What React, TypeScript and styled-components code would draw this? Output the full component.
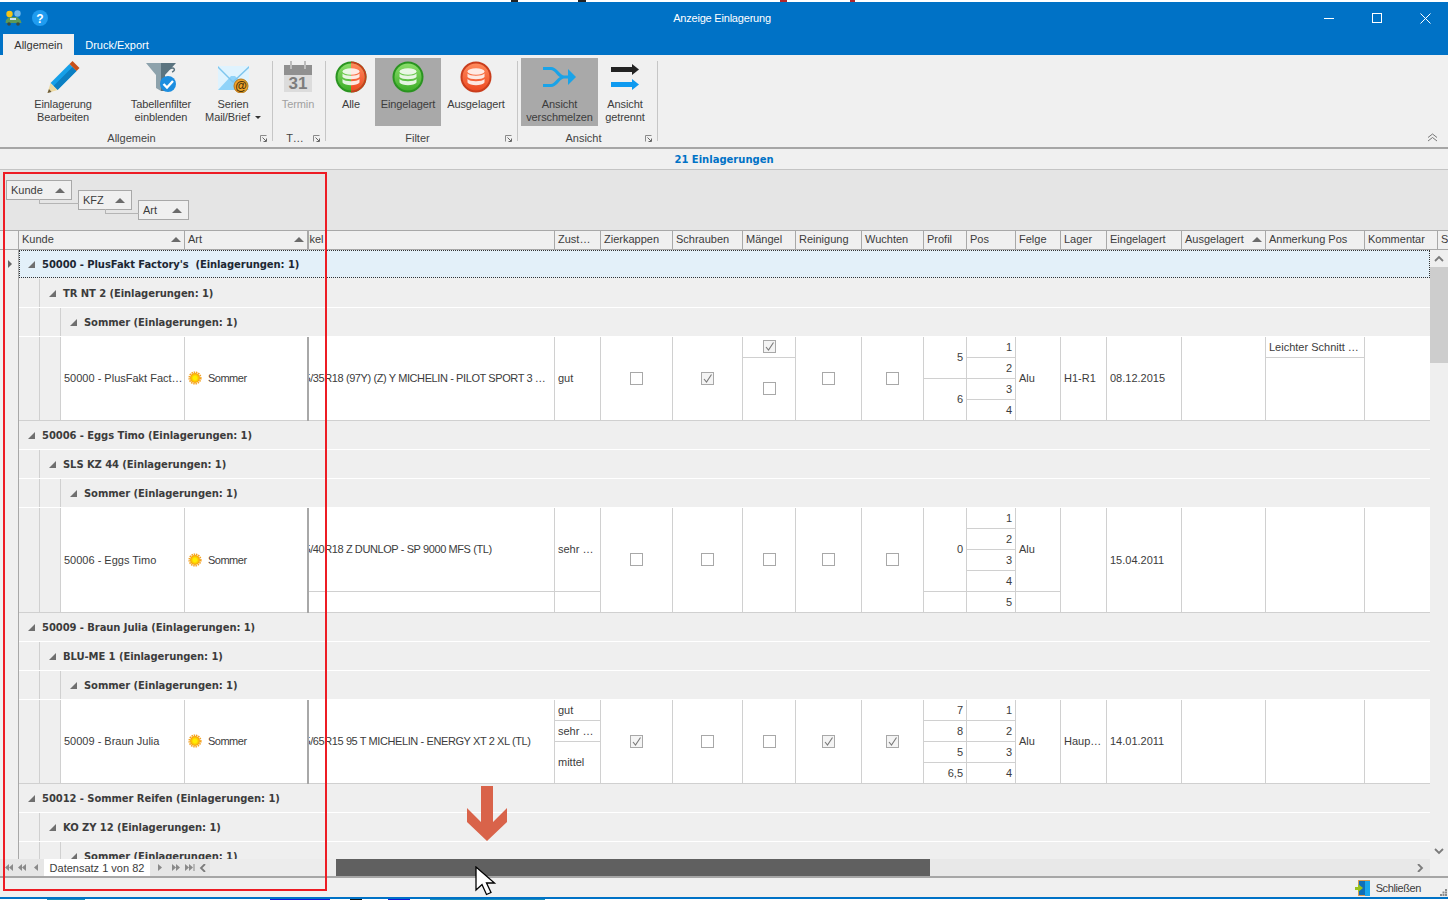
import { Fragment, ReactNode } from "react"
import styled, { createGlobalStyle } from "styled-components"

const GlobalStyle = createGlobalStyle`
  html, body { margin: 0; padding: 0; background: #f0f0f0; }
  body { font-family: "Liberation Sans", Arial, sans-serif; font-size: 11px; color: #3c3c3c; }
`

const BLUE = "#0072c6"
const LINE = "#d0d0d0"
const DARKLINE = "#a8a8a8"
const BOLD_FONT = `"DejaVu Sans", Verdana, sans-serif`

type Part = { h: number; text?: string; box?: "on" | "off"; sun?: boolean }
type Col = { title: string; w: number; right?: boolean; center?: boolean; shift?: boolean; heavy?: boolean; sort?: boolean }

const COLS: Col[] = [
  { title: "Kunde", w: 124, sort: true },
  { title: "Art", w: 124, heavy: true, sort: true },
  { title: "Artikel", w: 246, shift: true },
  { title: "Zust…", w: 46 },
  { title: "Zierkappen", w: 72, center: true },
  { title: "Schrauben", w: 70, center: true },
  { title: "Mängel", w: 53, center: true },
  { title: "Reinigung", w: 66, center: true },
  { title: "Wuchten", w: 62, center: true },
  { title: "Profil", w: 43, right: true },
  { title: "Pos", w: 49, right: true },
  { title: "Felge", w: 45 },
  { title: "Lager", w: 46 },
  { title: "Eingelagert", w: 75 },
  { title: "Ausgelagert", w: 84, sort: true },
  { title: "Anmerkung Pos", w: 99 },
  { title: "Kommentar", w: 73 },
]

const pos = (n: number): Part[] => Array.from({ length: n }, (_, i) => ({ h: 21, text: String(i + 1) }))
const one = (h: number, text = ""): Part[] => [{ h, text }]
const box = (h: number, on: boolean): Part[] => [{ h, box: on ? "on" : "off" }]

const ROWS: { groups: [string, string, string]; heights: [number, number, number]; focus?: boolean; cols: Part[][] }[] = [
  {
    groups: ["50000 - PlusFakt Factory's  (Einlagerungen: 1)", "TR NT 2 (Einlagerungen: 1)", "Sommer (Einlagerungen: 1)"],
    heights: [28, 30, 28],
    focus: true,
    cols: [
      one(84, "50000 - PlusFakt Fact…"),
      [{ h: 84, text: "Sommer", sun: true }],
      one(84, "225/35R18 (97Y) (Z) Y MICHELIN - PILOT SPORT 3 …"),
      one(84, "gut"),
      box(84, false),
      box(84, true),
      [{ h: 21, box: "on" }, { h: 63, box: "off" }],
      box(84, false),
      box(84, false),
      [{ h: 42, text: "5" }, { h: 42, text: "6" }],
      pos(4),
      one(84, "Alu"),
      one(84, "H1-R1"),
      one(84, "08.12.2015"),
      one(84),
      [{ h: 21, text: "Leichter Schnitt …" }, { h: 63 }],
      one(84),
    ],
  },
  {
    groups: ["50006 - Eggs Timo (Einlagerungen: 1)", "SLS KZ 44 (Einlagerungen: 1)", "Sommer (Einlagerungen: 1)"],
    heights: [29, 29, 28],
    cols: [
      one(105, "50006 - Eggs Timo"),
      [{ h: 105, text: "Sommer", sun: true }],
      [{ h: 84, text: "225/40R18 Z DUNLOP - SP 9000 MFS (TL)" }, { h: 21 }],
      [{ h: 84, text: "sehr …" }, { h: 21 }],
      box(105, false),
      box(105, false),
      box(105, false),
      box(105, false),
      box(105, false),
      [{ h: 84, text: "0" }, { h: 21 }],
      pos(5),
      [{ h: 84, text: "Alu" }, { h: 21 }],
      one(105),
      one(105, "15.04.2011"),
      one(105),
      one(105),
      one(105),
    ],
  },
  {
    groups: ["50009 - Braun Julia (Einlagerungen: 1)", "BLU-ME 1 (Einlagerungen: 1)", "Sommer (Einlagerungen: 1)"],
    heights: [29, 29, 28],
    cols: [
      one(84, "50009 - Braun Julia"),
      [{ h: 84, text: "Sommer", sun: true }],
      one(84, "195/65R15 95 T MICHELIN - ENERGY XT 2 XL (TL)"),
      [{ h: 21, text: "gut" }, { h: 21, text: "sehr …" }, { h: 42, text: "mittel" }],
      box(84, true),
      box(84, false),
      box(84, false),
      box(84, true),
      box(84, true),
      [{ h: 21, text: "7" }, { h: 21, text: "8" }, { h: 21, text: "5" }, { h: 21, text: "6,5" }],
      pos(4),
      one(84, "Alu"),
      one(84, "Haup…"),
      one(84, "14.01.2011"),
      one(84),
      one(84),
      one(84),
    ],
  },
]

const Screen = styled.div`
  position: relative;
  width: 1448px;
  height: 900px;
  overflow: hidden;
  display: flex;
  flex-direction: column;
  background: #f0f0f0;
`
const TopStrip = styled.div`
  height: 2px;
  background: linear-gradient(
    to right,
    #fff 511px,
    #222 511px 518px,
    #fff 518px 578px,
    #222 578px 586px,
    #fff 586px 780px,
    #b3262a 780px 787px,
    #fff 787px 850px,
    #b3262a 850px 855px,
    #fff 855px
  );
`
const TitleBar = styled.div`
  height: 32px;
  background: ${BLUE};
  display: grid;
  grid-template-columns: 1fr auto 1fr;
  align-items: center;
`
const QuickIcons = styled.div`
  display: flex;
  align-items: center;
  gap: 10px;
  padding-left: 5px;
`
const WindowTitle = styled.div`
  color: #fff;
  margin-right: 4px;
  letter-spacing: -0.2px;
`
const WindowButtons = styled.div`
  display: flex;
  justify-content: flex-end;
  margin-right: -1px;
`
const WindowButton = styled.div`
  width: 48px;
  height: 20px;
  display: flex;
  align-items: center;
  justify-content: center;
`
const TabBar = styled.div`
  height: 21px;
  background: ${BLUE};
  display: flex;
  padding-left: 3px;
`
const Tab = styled.div<{ $active?: boolean; $w: number }>`
  width: ${(p) => p.$w}px;
  display: flex;
  align-items: center;
  justify-content: center;
  background: ${(p) => (p.$active ? "#f0f0f0" : "transparent")};
  color: ${(p) => (p.$active ? "#333" : "#fff")};
`
const Ribbon = styled.div`
  height: 92px;
  display: flex;
  position: relative;
  border-bottom: 2px solid #a6a6a6;
  background: #f0f0f0;
`
const RibbonGroup = styled.div<{ $w: number }>`
  width: ${(p) => p.$w}px;
  display: flex;
  flex-direction: column;
`
const GroupButtons = styled.div<{ $pad?: number }>`
  height: 68px;
  margin-top: 3px;
  padding-left: ${(p) => p.$pad ?? 0}px;
  display: flex;
`
const RibbonButton = styled.div<{ $w: number; $ml?: number; $active?: boolean; $off?: boolean }>`
  width: ${(p) => p.$w}px;
  margin-left: ${(p) => p.$ml ?? 0}px;
  height: 68px;
  padding-top: 3px;
  box-sizing: border-box;
  display: flex;
  flex-direction: column;
  align-items: center;
  background: ${(p) => (p.$active ? "#a9a9a9" : "transparent")};
  color: ${(p) => (p.$off ? "#a0a0a0" : "#3c3c3c")};
`
const RibbonIcon = styled.div`
  height: 32px;
  display: flex;
  align-items: center;
  justify-content: center;
`
const RibbonLabel = styled.div`
  margin-top: 5px;
  line-height: 13px;
  text-align: center;
  white-space: nowrap;
  letter-spacing: -0.1px;
`
const DropMark = styled.span`
  display: inline-block;
  margin-left: 5px;
  vertical-align: 2px;
  border-style: solid;
  border-width: 3px 3px 0 3px;
  border-color: #333 transparent transparent transparent;
`
const GroupFooter = styled.div`
  display: flex;
  align-items: center;
  height: 13px;
  margin-top: 5px;
`
const GroupName = styled.div`
  flex: 1;
  padding-left: 3px;
  text-align: center;
  color: #444;
`
const Launcher = styled.div`
  width: 12px;
  display: flex;
  padding-top: 2px;
`
const RibbonSep = styled.div`
  flex: none;
  width: 1px;
  height: 80px;
  margin: 6px 1px 0 0;
  background: #c6c6c6;
`
const Collapse = styled.div`
  position: absolute;
  right: 10px;
  bottom: 5px;
  display: flex;
`
const CountBar = styled.div`
  height: 20px;
  display: flex;
  align-items: center;
  justify-content: center;
  font: bold 10px ${BOLD_FONT};
  color: ${BLUE};
  border-bottom: 1px solid #c4c4c4;
`
const GroupPanel = styled.div`
  height: 50px;
  padding: 10px 0 0 6px;
  background: #e5e5e5;
  display: flex;
  gap: 6px;
`
const GroupChip = styled.div<{ $w: number; $top: number; $link?: number }>`
  position: relative;
  width: ${(p) => p.$w}px;
  height: 20px;
  margin-top: ${(p) => p.$top}px;
  box-sizing: border-box;
  padding: 0 6px 0 4px;
  display: flex;
  align-items: center;
  justify-content: space-between;
  background: #f0f0f0;
  border: 1px solid #a8a8a8;
  &::before {
    content: "";
    display: ${(p) => (p.$link ? "block" : "none")};
    position: absolute;
    top: 8px;
    left: ${(p) => -(p.$link ?? 0) - 1}px;
    width: ${(p) => p.$link ?? 0}px;
    height: 4px;
    border-left: 1px solid #b4b4b4;
    border-bottom: 1px solid #b4b4b4;
  }
`
const SortMark = styled.span`
  flex: none;
  width: 0;
  height: 0;
  border-style: solid;
  border-width: 0 5px 5px 5px;
  border-color: transparent transparent #6b6b6b transparent;
`
const HeaderRow = styled.div`
  height: 18px;
  display: flex;
  background: #f0f0f0;
  border-top: 1px solid ${DARKLINE};
  border-bottom: 1px solid ${DARKLINE};
  overflow: hidden;
`
const HeaderGap = styled.div`
  flex: none;
  width: 18px;
  border-right: 1px solid ${DARKLINE};
`
const HeaderCell = styled.div<{ $w: number; $edge?: boolean }>`
  flex: none;
  width: ${(p) => p.$w}px;
  box-sizing: border-box;
  padding: 0 3px 2px;
  display: flex;
  align-items: center;
  justify-content: space-between;
  overflow: hidden;
  white-space: nowrap;
  border-right: 1px solid ${DARKLINE};
  border-left: ${(p) => (p.$edge ? `1px solid ${DARKLINE}` : "0")};
`
const ClippedTitle = styled.span`
  margin-left: -19px;
  margin-right: auto;
  white-space: nowrap;
`
const ClippedText = styled.span`
  margin-left: -16px;
  white-space: nowrap;
  letter-spacing: -0.4px;
`
const GridBody = styled.div`
  height: 609px;
  display: flex;
`
const Indicator = styled.div`
  flex: none;
  width: 18px;
  background: #f0f0f0;
  border-right: 1px solid ${DARKLINE};
  padding-top: 10px;
  height: 599px;
`
const CurrentMark = styled.div`
  margin-left: 8px;
  width: 0;
  height: 0;
  border-style: solid;
  border-width: 4px 0 4px 4px;
  border-color: transparent transparent transparent #666;
`
const Rows = styled.div`
  width: 1411px;
  overflow: hidden;
`
const GroupLine = styled.div<{ $h: number; $focus?: boolean; $plain?: boolean; $low?: boolean }>`
  height: ${(p) => p.$h}px;
  box-sizing: border-box;
  padding-top: ${(p) => (p.$low ? 1 : 0)}px;
  display: flex;
  align-items: stretch;
  background: ${(p) => (p.$focus ? "#e3f0f9" : "#efefef")};
  border: ${(p) => (p.$focus ? "1px dotted #333" : "0")};
  border-bottom: ${(p) => (p.$focus ? "1px dotted #333" : p.$plain ? "0" : "1px solid #fff")};
`
const Indent = styled.div`
  flex: none;
  width: 20px;
  background: #efefef;
  border-right: 1px solid ${LINE};
`
const GroupText = styled.div<{ $focus?: boolean }>`
  display: flex;
  align-items: center;
  font: bold 10px ${BOLD_FONT};
  letter-spacing: -0.08px;
  white-space: pre;
  color: ${(p) => (p.$focus ? "#1c2733" : "#3c3c3c")};
  margin-left: ${(p) => (p.$focus ? 8 : 9)}px;
`
const Expander = styled.span`
  width: 0;
  height: 0;
  margin-right: 7px;
  border-style: solid;
  border-width: 0 0 7px 7px;
  border-color: transparent transparent #6f6f6f transparent;
`
const DataLine = styled.div`
  display: flex;
  background: #fff;
  border-top: 1px solid #fff;
`
const DataIndent = styled(Indent)`
  border-bottom: 1px solid ${LINE};
`
const DataCol = styled.div<{ $w: number; $heavy?: boolean }>`
  flex: none;
  width: ${(p) => p.$w}px;
  box-sizing: border-box;
  display: flex;
  flex-direction: column;
  border-right: ${(p) => (p.$heavy ? `2px solid ${DARKLINE}` : `1px solid ${LINE}`)};
`
const DataPart = styled.div<{ $h: number; $right?: boolean; $center?: boolean; $shift?: boolean }>`
  height: ${(p) => p.$h}px;
  box-sizing: border-box;
  border-bottom: 1px solid ${LINE};
  padding: 0 ${(p) => (p.$shift ? 0 : 3)}px 1px;
  display: flex;
  align-items: center;
  overflow: hidden;
  white-space: nowrap;
  color: #3c3c3c;
  justify-content: ${(p) => (p.$right ? "flex-end" : p.$center ? "center" : "flex-start")};
`
const SunText = styled.span`
  display: flex;
  align-items: center;
  gap: 6px;
  letter-spacing: -0.5px;
`
const CheckBox = styled.div<{ $on?: boolean }>`
  width: 13px;
  height: 13px;
  box-sizing: border-box;
  border: 1px solid #a8a8a8;
  background: ${(p) => (p.$on ? "#f4f4f4" : "#fff")};
  display: flex;
  align-items: center;
  justify-content: center;
`
const VScroll = styled.div`
  flex: none;
  width: 18px;
  background: #efefef;
  display: flex;
  flex-direction: column;
`
const ScrollBtn = styled.div<{ $h: number }>`
  height: ${(p) => p.$h}px;
  display: flex;
  align-items: center;
  justify-content: center;
`
const VThumb = styled.div`
  height: 96px;
  background: #cdcdcd;
`
const VTrack = styled.div`
  flex: 1;
  background: #efefef;
`
const NavRow = styled.div`
  height: 17px;
  display: flex;
  border-bottom: 2px solid #a6a6a6;
  background: #ececec;
`
const Pager = styled.div`
  width: 336px;
  flex: none;
  display: flex;
  align-items: stretch;
  background: #ececec;
`
const PagerBtn = styled.div<{ $w: number }>`
  width: ${(p) => p.$w}px;
  flex: none;
  background: #e6e6e6;
  display: flex;
  align-items: center;
  justify-content: center;
`
const PagerLabel = styled.div`
  width: 106px;
  flex: none;
  background: #fff;
  display: flex;
  align-items: center;
  justify-content: center;
`
const HThumb = styled.div`
  width: 594px;
  flex: none;
  background: #606060;
`
const HTrack = styled.div`
  flex: 1;
  display: flex;
  align-items: center;
  justify-content: flex-end;
  padding-right: 4px;
  background: #e8e8e8;
`
const Corner = styled.div`
  width: 18px;
  flex: none;
  background: #f0f0f0;
`
const StatusBar = styled.div`
  height: 19px;
  display: flex;
  align-items: center;
  justify-content: flex-end;
  gap: 6px;
  background: #f0f0f0;
`
const CloseLabel = styled.span`
  letter-spacing: -0.4px;
`
const Grip = styled.div`
  margin-left: 13px;
  margin-top: 9px;
  margin-right: 1px;
  display: flex;
`
const BottomStrip = styled.div`
  flex: 1;
  border-top: 2px solid ${BLUE};
  background: linear-gradient(
    to right,
    #fff 47px,
    #1b8fb8 47px 85px,
    #fff 85px 270px,
    #1414d8 270px 330px,
    #fff 330px 350px,
    #111 350px 362px,
    #fff 362px 388px,
    #1414d8 388px 410px,
    #fff 410px 430px,
    #1b8fb8 430px 545px,
    #fff 545px
  );
`
const RedFrame = styled.div`
  position: absolute;
  left: 3px;
  top: 172px;
  width: 320px;
  height: 715px;
  border: 2px solid #ed1c24;
  pointer-events: none;
`
const DownArrow = styled.svg`
  position: absolute;
  left: 467px;
  top: 786px;
`
const Pointer = styled.svg`
  position: absolute;
  left: 475px;
  top: 866px;
`

function AppIcon() {
  return (
    <svg width="17" height="16" viewBox="0 0 17 16">
      <circle cx="4.5" cy="4" r="3.2" fill="#f5c518" />
      <circle cx="12.5" cy="3.5" r="3.2" fill="#6fb7ea" />
      <path d="M1 10 L4 7 H12 L15.5 10 L16.5 13 H0.5 Z" fill="#5c9a58" />
      <rect x="5" y="8" width="6" height="2" fill="#c8e3f2" />
      <circle cx="4" cy="14" r="1.8" fill="#3b4a3f" />
      <circle cx="13" cy="14" r="1.8" fill="#3b4a3f" />
    </svg>
  )
}

function HelpIcon() {
  return (
    <svg width="16" height="16" viewBox="0 0 16 16">
      <circle cx="8" cy="8" r="8" fill="#1f9cf0" />
      <text x="8" y="12.5" textAnchor="middle" fontSize="12" fontWeight="bold" fill="#fff" fontFamily="Liberation Sans">?</text>
    </svg>
  )
}

function PencilIcon() {
  return (
    <svg width="34" height="33" viewBox="0 0 33 33">
      <polygon points="4,22 23,3 30,10 11,29" fill="#16a0e8" />
      <polygon points="7,25 26,6 30,10 11,29" fill="#0c7fc2" />
      <polygon points="23,3 26,0 33,7 30,10" fill="#c8501a" />
      <polygon points="4,22 11,29 1,32" fill="#ecd9a0" />
      <polygon points="2.5,28 5,31 1,32" fill="#6a5a3a" />
    </svg>
  )
}

function FilterIcon() {
  return (
    <svg width="32" height="32" viewBox="0 0 32 32">
      <polygon points="1,2 16,2 16,30 11,27 11,14" fill="#8da2ac" />
      <polygon points="16,2 31,2 20,14 20,30 16,30" fill="#5b7480" />
      <path d="M24 8 C30 5 31 10 27 11" fill="none" stroke="#5b7480" strokeWidth="1.5" />
      <circle cx="23" cy="23" r="8" fill="#1c8ee0" />
      <path d="M18.5 23 L22 26.5 L28 20" fill="none" stroke="#fff" strokeWidth="2.4" />
    </svg>
  )
}

function MailIcon() {
  return (
    <svg width="33" height="32" viewBox="0 0 33 32">
      <rect x="1" y="5" width="31" height="24" fill="#dff3fe" />
      <polygon points="1,29 14,15 18,15 32,29" fill="#8fd3f9" />
      <polygon points="1,5 16,20 32,5 32,7 16,22 1,7" fill="#7ec6ee" />
      <circle cx="24" cy="25" r="7" fill="#f0a52a" stroke="#b5771a" />
      <text x="24" y="29" textAnchor="middle" fontSize="12" fontWeight="bold" fill="#4a3208" fontFamily="Liberation Sans">@</text>
    </svg>
  )
}

function CalendarIcon() {
  return (
    <svg width="30" height="33" viewBox="0 0 30 33">
      <rect x="1" y="4" width="28" height="27" fill="#dcdcdc" />
      <rect x="1" y="4" width="28" height="10" fill="#909090" />
      <rect x="7" y="0" width="2" height="8" fill="#bdbdbd" />
      <rect x="21" y="0" width="2" height="8" fill="#bdbdbd" />
      <text x="15" y="28" textAnchor="middle" fontSize="17" fontWeight="bold" fill="#7d7d7d" fontFamily="Liberation Sans">31</text>
    </svg>
  )
}

function DbStack() {
  return (
    <g fill="#fff" opacity="0.85">
      <ellipse cx="16" cy="10.5" rx="8.5" ry="3.2" />
      <path d="M7.5 12.5 C10 15.5 22 15.5 24.5 12.5 V16 C22 19 10 19 7.5 16 Z" />
      <path d="M7.5 18 C10 21 22 21 24.5 18 V21.5 C22 25 10 25 7.5 21.5 Z" />
    </g>
  )
}

function DbIcon({ tone }: { tone: "green" | "red" | "both" }) {
  const green = "url(#dbGreen)"
  const red = "url(#dbRed)"
  return (
    <svg width="32" height="32" viewBox="0 0 32 32">
      <defs>
        <linearGradient id="dbGreen" x1="0" y1="0" x2="0" y2="1">
          <stop offset="0%" stopColor="#8ade6a" />
          <stop offset="100%" stopColor="#3fae2a" />
        </linearGradient>
        <linearGradient id="dbRed" x1="0" y1="0" x2="0" y2="1">
          <stop offset="0%" stopColor="#ff8a5c" />
          <stop offset="100%" stopColor="#ee4a22" />
        </linearGradient>
      </defs>
      <circle cx="16" cy="16" r="15.5" fill={tone === "red" ? "#c93d1c" : "#2a9420"} />
      {tone === "both" && <path d="M16 .5 A15.500 15.500 0 0 1 16 31.500 Z" fill="#c93d1c" />}
      <circle cx="16" cy="16" r="13.5" fill={tone === "red" ? red : green} />
      {tone === "both" && <path d="M16 2.500 A13.500 13.500 0 0 1 16 29.500 Z" fill={red} />}
      <DbStack />
    </svg>
  )
}

function MergeIcon() {
  return (
    <svg width="33" height="24" viewBox="0 0 33 24">
      <path d="M0 3.500 H8 C14 3.500 15 12 21 12 H26 M0 20.500 H8 C14 20.500 15 12 21 12" fill="none" stroke="#1aa3e8" strokeWidth="3.200" />
      <polygon points="25,4 33,12 25,20" fill="#1aa3e8" />
    </svg>
  )
}

function SplitIcon() {
  return (
    <svg width="28" height="26" viewBox="0 0 28 26">
      <rect x="0" y="3" width="23" height="5" fill="#222" />
      <polygon points="21,0 28,5.500 21,11" fill="#222" />
      <rect x="0" y="18" width="23" height="5" fill="#0e9af0" />
      <polygon points="21,15 28,20.500 21,26" fill="#0e9af0" />
    </svg>
  )
}

function LauncherIcon() {
  return (
    <svg width="7" height="7" viewBox="0 0 7 7">
      <path d="M.5 6.5 V.5 H6.5" fill="none" stroke="#8a8a8a" />
      <path d="M2.5 2.5 L6 6 M3.5 6.5 H6.5 V3.5" fill="none" stroke="#666" />
    </svg>
  )
}

function Sun() {
  return (
    <svg width="14" height="14" viewBox="0 0 14 14">
      <defs>
        <radialGradient id="sunFill">
          <stop offset="35%" stopColor="#ffee00" />
          <stop offset="100%" stopColor="#f79a0a" />
        </radialGradient>
      </defs>
      <circle cx="7" cy="7" r="5.8" fill="none" stroke="#f4a11e" strokeWidth="1.600" strokeDasharray="1.500 0.800" />
      <circle cx="7" cy="7" r="5" fill="url(#sunFill)" />
    </svg>
  )
}

function Check() {
  return (
    <svg width="11" height="11" viewBox="0 0 11 11">
      <path d="M2 6 L4.5 9 L9.5 1.5" fill="none" stroke="#7a7a7a" strokeWidth="1.1" />
    </svg>
  )
}

function Chevron({ dir }: { dir: "up" | "down" | "left" | "right" }) {
  const d = {
    up: "M1 6 L5 2 L9 6",
    down: "M1 2 L5 6 L9 2",
    left: "M6 0 L2 4 L6 8",
    right: "M2 0 L6 4 L2 8",
  }[dir]
  return (
    <svg width="10" height="8" viewBox="0 0 10 8">
      <path d={d} fill="none" stroke="#7b7b7b" strokeWidth="1.8" />
    </svg>
  )
}

function NavGlyph({ back, count = 1, bar }: { back?: boolean; count?: number; bar?: boolean }) {
  const heads = Array.from({ length: count }, (_, i) => {
    const x = i * 4
    return back ? `M${x + 4} 0 L${x} 3.5 L${x + 4} 7 Z` : `M${x} 0 L${x + 4} 3.5 L${x} 7 Z`
  })
  const width = count * 4 + (bar ? 2 : 1)
  return (
    <svg width={width} height="7" viewBox={`${back && bar ? -2 : 0} 0 ${width} 7`}>
      <path d={heads.join(" ")} fill="#8a8a8a" />
      {bar && <rect x={back ? -2 : count * 4 + 0.5} y="0" width="1" height="7" fill="#8a8a8a" />}
    </svg>
  )
}

function DoorIcon() {
  return (
    <svg width="15" height="16" viewBox="0 0 15 16">
      <rect x="3" y="0" width="12" height="16" fill="#d99a4e" />
      <rect x="4" y="1" width="7" height="14" fill="#0f6fb8" />
      <rect x="10" y="1" width="5" height="15" fill="#1aa6ea" />
      <polygon points="0,7 3,7 3,4 8,8 3,12 3,10 0,10" fill="#9ac31c" />
    </svg>
  )
}

function cellBody(col: Col, part: Part): ReactNode {
  if (part.box) {
    return <CheckBox $on={part.box === "on"}>{part.box === "on" && <Check />}</CheckBox>
  }
  if (part.sun) {
    return (
      <SunText>
        <Sun />
        {part.text}
      </SunText>
    )
  }
  if (col.shift && part.text) return <ClippedText>{part.text}</ClippedText>
  return part.text
}

export default function App() {
  return (
    <Screen>
      <GlobalStyle />
      <TopStrip />
      <TitleBar>
        <QuickIcons>
          <AppIcon />
          <HelpIcon />
        </QuickIcons>
        <WindowTitle>Anzeige Einlagerung</WindowTitle>
        <WindowButtons>
          <WindowButton>
            <svg width="10" height="10" viewBox="0 0 10 10"><path d="M0 5.5 H10" stroke="#fff" /></svg>
          </WindowButton>
          <WindowButton>
            <svg width="10" height="10" viewBox="0 0 10 10"><rect x=".5" y=".5" width="9" height="9" fill="none" stroke="#fff" /></svg>
          </WindowButton>
          <WindowButton>
            <svg width="11" height="11" viewBox="0 0 11 11"><path d="M.5 .5 L10.5 10.5 M10.5 .5 L.5 10.5" stroke="#fff" /></svg>
          </WindowButton>
        </WindowButtons>
      </TitleBar>
      <TabBar>
        <Tab $active $w={71}>Allgemein</Tab>
        <Tab $w={86}>Druck/Export</Tab>
      </TabBar>

      <Ribbon>
        <RibbonGroup $w={272}>
          <GroupButtons>
            <RibbonButton $w={78} $ml={24}>
              <RibbonIcon><PencilIcon /></RibbonIcon>
              <RibbonLabel>Einlagerung<br />Bearbeiten</RibbonLabel>
            </RibbonButton>
            <RibbonButton $w={78} $ml={20}>
              <RibbonIcon><FilterIcon /></RibbonIcon>
              <RibbonLabel>Tabellenfilter<br />einblenden</RibbonLabel>
            </RibbonButton>
            <RibbonButton $w={66}>
              <RibbonIcon><MailIcon /></RibbonIcon>
              <RibbonLabel>Serien<br />Mail/Brief<DropMark /></RibbonLabel>
            </RibbonButton>
          </GroupButtons>
          <GroupFooter>
            <GroupName>Allgemein</GroupName>
            <Launcher><LauncherIcon /></Launcher>
          </GroupFooter>
        </RibbonGroup>
        <RibbonSep />
        <RibbonGroup $w={51}>
          <GroupButtons>
            <RibbonButton $w={48} $off>
              <RibbonIcon><CalendarIcon /></RibbonIcon>
              <RibbonLabel>Termin</RibbonLabel>
            </RibbonButton>
          </GroupButtons>
          <GroupFooter>
            <GroupName>T…</GroupName>
            <Launcher><LauncherIcon /></Launcher>
          </GroupFooter>
        </RibbonGroup>
        <RibbonSep />
        <RibbonGroup $w={190}>
          <GroupButtons>
            <RibbonButton $w={48}>
              <RibbonIcon><DbIcon tone="both" /></RibbonIcon>
              <RibbonLabel>Alle</RibbonLabel>
            </RibbonButton>
            <RibbonButton $w={66} $active>
              <RibbonIcon><DbIcon tone="green" /></RibbonIcon>
              <RibbonLabel>Eingelagert</RibbonLabel>
            </RibbonButton>
            <RibbonButton $w={70}>
              <RibbonIcon><DbIcon tone="red" /></RibbonIcon>
              <RibbonLabel>Ausgelagert</RibbonLabel>
            </RibbonButton>
          </GroupButtons>
          <GroupFooter>
            <GroupName>Filter</GroupName>
            <Launcher><LauncherIcon /></Launcher>
          </GroupFooter>
        </RibbonGroup>
        <RibbonSep />
        <RibbonGroup $w={138}>
          <GroupButtons $pad={2}>
            <RibbonButton $w={77} $active>
              <RibbonIcon><MergeIcon /></RibbonIcon>
              <RibbonLabel>Ansicht<br />verschmelzen</RibbonLabel>
            </RibbonButton>
            <RibbonButton $w={54}>
              <RibbonIcon><SplitIcon /></RibbonIcon>
              <RibbonLabel>Ansicht<br />getrennt</RibbonLabel>
            </RibbonButton>
          </GroupButtons>
          <GroupFooter>
            <GroupName>Ansicht</GroupName>
            <Launcher><LauncherIcon /></Launcher>
          </GroupFooter>
        </RibbonGroup>
        <RibbonSep />
        <Collapse>
          <svg width="11" height="9" viewBox="0 0 11 9">
            <path d="M1 4.5 L5.5 1 L10 4.5 M1 8 L5.5 4.5 L10 8" fill="none" stroke="#777" />
          </svg>
        </Collapse>
      </Ribbon>

      <CountBar>21 Einlagerungen</CountBar>
      <GroupPanel>
        <GroupChip $w={66} $top={0}>Kunde<SortMark /></GroupChip>
        <GroupChip $w={54} $top={10} $link={39}>KFZ<SortMark /></GroupChip>
        <GroupChip $w={51} $top={20} $link={33}>Art<SortMark /></GroupChip>
      </GroupPanel>

      <HeaderRow>
        <HeaderGap />
        {COLS.map((col, i) => (
          <HeaderCell
            key={col.title}
            $edge={col.shift}
            $w={i === 0 ? 166 : col.heavy ? 123 : col.shift ? col.w + 1 : col.w}
          >
            {col.shift ? <ClippedTitle>{col.title}</ClippedTitle> : col.title}
            {col.sort && <SortMark />}
          </HeaderCell>
        ))}
        <HeaderCell $w={20}>S</HeaderCell>
      </HeaderRow>

      <GridBody>
        <Indicator><CurrentMark /></Indicator>
        <Rows>
          {ROWS.map((row) => (
            <Fragment key={row.groups[0]}>
              <GroupLine $h={row.heights[0]} $focus={row.focus}>
                <GroupText $focus={row.focus}><Expander />{row.groups[0]}</GroupText>
              </GroupLine>
              <GroupLine $h={row.heights[1]} $low={row.focus}>
                <Indent />
                <GroupText><Expander />{row.groups[1]}</GroupText>
              </GroupLine>
              <GroupLine $h={row.heights[2]} $plain>
                <Indent />
                <Indent />
                <GroupText><Expander />{row.groups[2]}</GroupText>
              </GroupLine>
              <DataLine>
                <DataIndent />
                <DataIndent />
                {COLS.map((col, i) => (
                  <DataCol key={col.title} $w={col.w} $heavy={col.heavy}>
                    {row.cols[i].map((part, j) => (
                      <DataPart key={j} $h={part.h} $right={col.right} $center={col.center} $shift={col.shift}>
                        {cellBody(col, part)}
                      </DataPart>
                    ))}
                  </DataCol>
                ))}
              </DataLine>
            </Fragment>
          ))}
          <GroupLine $h={29}>
            <GroupText><Expander />50012 - Sommer Reifen (Einlagerungen: 1)</GroupText>
          </GroupLine>
          <GroupLine $h={29}>
            <Indent />
            <GroupText><Expander />KO ZY 12 (Einlagerungen: 1)</GroupText>
          </GroupLine>
          <GroupLine $h={28} $plain>
            <Indent />
            <Indent />
            <GroupText><Expander />Sommer (Einlagerungen: 1)</GroupText>
          </GroupLine>
        </Rows>
        <VScroll>
          <ScrollBtn $h={17}><Chevron dir="up" /></ScrollBtn>
          <VThumb />
          <VTrack />
          <ScrollBtn $h={17}><Chevron dir="down" /></ScrollBtn>
        </VScroll>
      </GridBody>

      <NavRow>
        <Pager>
          <PagerBtn $w={16}><NavGlyph back count={2} bar /></PagerBtn>
          <PagerBtn $w={13}><NavGlyph back count={2} /></PagerBtn>
          <PagerBtn $w={15}><NavGlyph back /></PagerBtn>
          <PagerLabel>Datensatz 1 von 82</PagerLabel>
          <PagerBtn $w={20}><NavGlyph /></PagerBtn>
          <PagerBtn $w={12}><NavGlyph count={2} /></PagerBtn>
          <PagerBtn $w={16}><NavGlyph count={2} bar /></PagerBtn>
          <PagerBtn $w={12}><Chevron dir="left" /></PagerBtn>
        </Pager>
        <HThumb />
        <HTrack><Chevron dir="right" /></HTrack>
        <Corner />
      </NavRow>

      <StatusBar>
        <DoorIcon />
        <CloseLabel>Schließen</CloseLabel>
        <Grip>
          <svg width="7" height="7" viewBox="0 0 7 7">
            <path d="M5 0 h2 v2 h-2 Z M2.500 2.500 h2 v2 h-2 Z M5 2.500 h2 v2 h-2 Z M0 5 h2 v2 h-2 Z M2.500 5 h2 v2 h-2 Z M5 5 h2 v2 h-2 Z" fill="#8a8a8a" />
          </svg>
        </Grip>
      </StatusBar>
      <BottomStrip />

      <RedFrame />
      <DownArrow width="40" height="55" viewBox="0 0 40 55">
        <polygon points="14,0 26,0 26,36 40,22 40,36 20,55 0,36 0,22 14,36" fill="#d9634a" />
      </DownArrow>
      <Pointer width="22" height="30" viewBox="0 0 22 30">
        <path d="M1 1 V24 L7 18.500 L11.500 28.500 L16 26.500 L11.500 17 H19.500 Z" fill="#fff" stroke="#000" strokeWidth="1.300" />
      </Pointer>
    </Screen>
  )
}
